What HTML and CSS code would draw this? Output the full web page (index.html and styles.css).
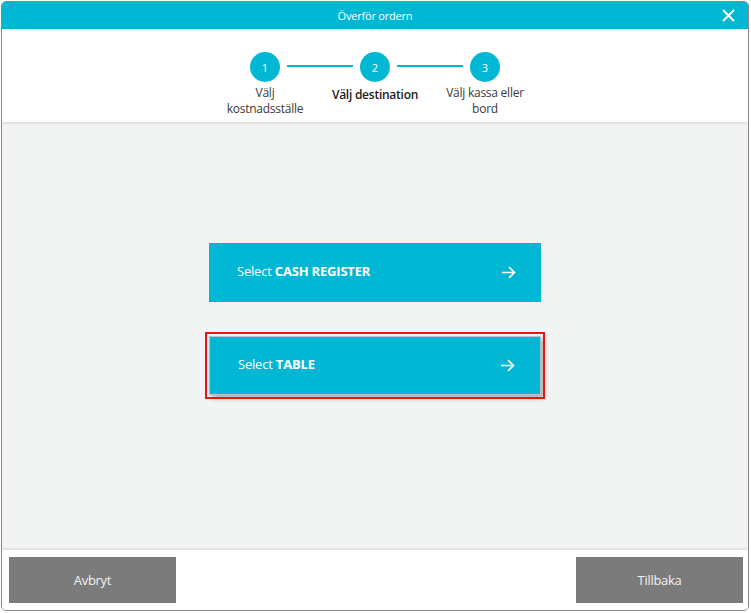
FILE: index.html
```html
<!DOCTYPE html>
<html lang="sv">
<head>
<meta charset="utf-8">
<title>Överför ordern</title>
<link rel="stylesheet" href="styles.css">
</head>
<body>
<div class="window">
  <header class="titlebar">
    <span class="title">Överför ordern</span>
    <button class="close" aria-label="Stäng">
      <svg width="13" height="13" viewBox="0 0 13 13"><path d="M1 1 L12 12 M12 1 L1 12" stroke="#fff" stroke-width="2" fill="none"/></svg>
    </button>
  </header>
  <div class="steps">
    <div class="step">
      <div class="circle">1</div>
      <div class="label">Välj<br>kostnadsställe</div>
    </div>
    <div class="step step-link active">
      <div class="circle">2</div>
      <div class="label">Välj destination</div>
    </div>
    <div class="step step-link">
      <div class="circle">3</div>
      <div class="label">Välj kassa eller<br>bord</div>
    </div>
  </div>
  <main class="content">
    <button class="choice">
      <span>Select <b>CASH REGISTER</b></span>
      <svg class="arrow" width="15" height="13" viewBox="0 0 15 13"><path d="M1 6.5 H13.5 M8 1.2 L13.5 6.5 L8 11.8" stroke="#fff" stroke-width="1.6" fill="none"/></svg>
    </button>
    <button class="choice focused">
      <span>Select <b>TABLE</b></span>
      <svg class="arrow" width="15" height="13" viewBox="0 0 15 13"><path d="M1 6.5 H13.5 M8 1.2 L13.5 6.5 L8 11.8" stroke="#fff" stroke-width="1.6" fill="none"/></svg>
    </button>
  </main>
  <footer class="footer">
    <button class="fbtn">Avbryt</button>
    <button class="fbtn">Tillbaka</button>
  </footer>
</div>
</body>
</html>
```

FILE: styles.css
```css
* { box-sizing: border-box; }
html, body { margin: 0; padding: 0; background: #fff; }
body { font-family: "Open Sans", "Noto Sans", sans-serif; }

.window {
  margin: 1px 0 0 1px;
  width: 748px;
  height: 610px;
  border: 1px solid #858585;
  border-radius: 5px;
  overflow: hidden;
  display: flex;
  flex-direction: column;
  background: #fff;
}

.titlebar {
  height: 27px;
  flex: none;
  background: #02b7d3;
  display: flex;
  align-items: center;
  justify-content: center;
  position: relative;
}
.title {
  color: #fff;
  font-size: 11px;
  letter-spacing: -0.2px;
}
.close {
  position: absolute;
  right: 13px;
  top: 7px;
  padding: 0;
  border: 0;
  background: none;
  width: 13px;
  height: 13px;
  display: block;
}
.close svg { display: block; }

.steps {
  height: 93px;
  flex: none;
  display: flex;
  justify-content: center;
  padding-top: 23px;
  background: #fff;
  box-shadow: 0 1px 3px rgba(0,0,0,0.13);
  position: relative;
  z-index: 1;
}
.step {
  width: 110px;
  display: flex;
  flex-direction: column;
  align-items: center;
  position: relative;
}
.step-link::before {
  content: "";
  position: absolute;
  left: -33px;
  width: 66px;
  top: 13px;
  height: 2px;
  background: #02b7d3;
}
.circle {
  width: 30px;
  height: 30px;
  border-radius: 50%;
  background: #02b7d3;
  color: #fff;
  font-size: 11px;
  display: flex;
  align-items: center;
  justify-content: center;
}
.label {
  margin-top: 3px;
  font-size: 12px;
  line-height: 16px;
  color: #3a3a3a;
  text-align: center;
  letter-spacing: -0.25px;
}
.step.active .label {
  font-weight: 600;
  color: #222;
  margin-top: 5px;
}

.content {
  flex: 1;
  background: #f2f3f3;
  display: flex;
  flex-direction: column;
  align-items: center;
  padding-top: 121px;
  gap: 34px;
}
.choice {
  width: 332px;
  height: 59px;
  border: 0;
  background: #02b7d3;
  color: #fff;
  font-family: inherit;
  font-size: 13px;
  letter-spacing: -0.2px;
  display: flex;
  align-items: center;
  justify-content: space-between;
  padding: 0 25px 0 28px;
  text-align: left;
}
.choice span { margin-top: -4px; }
.choice b { font-weight: 700; }
.choice .arrow { display: block; }
.choice.focused {
  border: 1px solid #b9c4c6;
  outline: 2px solid #e8141b;
  outline-offset: 2px;
  box-shadow: 3px 3px 5px rgba(0,0,0,0.3);
}

.footer {
  height: 60px;
  flex: none;
  background: #fff;
  display: flex;
  justify-content: space-between;
  padding: 7px 5px 0 7px;
  box-shadow: 0 -1px 3px rgba(0,0,0,0.12);
  position: relative;
}
.fbtn {
  width: 167px;
  height: 46px;
  border: 0;
  background: #7b7b7b;
  color: #f2f2f2;
  font-family: inherit;
  font-size: 13px;
  letter-spacing: -0.3px;
}
```
